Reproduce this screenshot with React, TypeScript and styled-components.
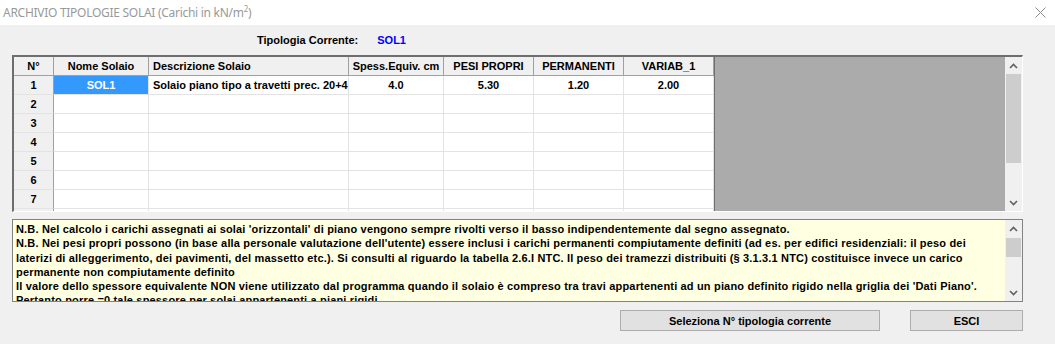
import styled, { createGlobalStyle } from 'styled-components';

const GlobalStyle = createGlobalStyle`
  html, body {
    margin: 0;
    padding: 0;
    background: #f0f0f0;
  }
  body {
    font-family: "Liberation Sans", Arial, sans-serif;
    font-size: 11px;
    color: #000;
  }
`;

const Window = styled.div`
  width: 1055px;
  height: 344px;
  background: #f0f0f0;
  display: flex;
  flex-direction: column;
  overflow: hidden;
`;

const TitleBar = styled.div`
  height: 25px;
  background: #ffffff;
  display: flex;
  align-items: center;
  justify-content: space-between;
  padding: 0 9px 0 3px;
  box-sizing: border-box;
`;

const Title = styled.span`
  font-family: "Noto Sans", "Open Sans", sans-serif;
  font-size: 12px;
  color: #999999;
  letter-spacing: -0.28px;
  sup {
    font-size: 8px;
    vertical-align: 5px;
    line-height: 0;
  }
`;

const Body = styled.div`
  padding: 0 32px 0 12px;
  display: flex;
  flex-direction: column;
`;

const CurrentRow = styled.div`
  height: 30px;
  display: flex;
  align-items: center;
  padding: 0 0 0 245px;
  gap: 19px;
  font-weight: bold;
  font-size: 11px;
`;

const CurrentValue = styled.span`
  color: #0000ff;
`;

const GridFrame = styled.div`
  height: 157px;
  box-sizing: border-box;
  border-style: solid;
  border-width: 2px 1px 1px 2px;
  border-color: #6e6e6e #ffffff #ffffff #6e6e6e;
  display: flex;
  overflow: hidden;
`;

const Grid = styled.div`
  display: grid;
  grid-template-columns: 40px 95px 200px 95px 90px 90px 90px;
  grid-auto-rows: 19px;
  background: #ffffff;
  font-weight: bold;
`;

const Cell = styled.div<{ $head?: boolean; $fixed?: boolean; $left?: boolean; $selected?: boolean }>`
  box-sizing: border-box;
  display: flex;
  align-items: center;
  justify-content: ${(p) => (p.$left ? 'flex-start' : 'center')};
  padding: ${(p) => (p.$left ? '0 0 0 4px' : '0')};
  white-space: nowrap;
  overflow: hidden;
  background: ${(p) => (p.$selected ? '#3399ff' : p.$head || p.$fixed ? '#f0f0f0' : '#ffffff')};
  color: ${(p) => (p.$selected ? '#ffffff' : '#000000')};
  border-right: 1px solid ${(p) => (p.$head || p.$fixed ? '#a0a0a0' : '#e3e3e3')};
  border-bottom: 1px solid ${(p) => (p.$head ? '#a0a0a0' : '#e3e3e3')};
`;

const EmptyArea = styled.div`
  flex: 1;
  background: #ababab;
  border-left: 1px solid #6e6e6e;
`;

const ScrollBar = styled.div`
  width: 17px;
  flex-shrink: 0;
  background: #f0f0f0;
  display: flex;
  flex-direction: column;
  align-items: center;
`;

const ArrowBox = styled.div`
  width: 17px;
  height: 17px;
  display: flex;
  align-items: center;
  justify-content: center;
  flex-shrink: 0;
`;

const Track = styled.div`
  flex: 1;
  width: 100%;
`;

const Thumb = styled.div<{ $top: number; $size: number }>`
  margin: ${(p) => p.$top}px auto 0;
  width: 15px;
  height: ${(p) => p.$size}px;
  background: #cdcdcd;
`;

const Notes = styled.div`
  margin-top: 7px;
  height: 83px;
  box-sizing: border-box;
  border: 1px solid #828282;
  background: #ffffe1;
  display: flex;
`;

const NotesText = styled.div`
  flex: 1;
  padding: 2px 0 0 3px;
  overflow: hidden;
  font-weight: bold;
  line-height: 14.3px;
  letter-spacing: 0.17px;
`;

const NoteLine = styled.div`
  white-space: nowrap;
`;

const ButtonRow = styled.div`
  margin-top: 8px;
  display: flex;
  justify-content: flex-end;
  gap: 30px;
`;

const Button = styled.button<{ $width: number }>`
  width: ${(p) => p.$width}px;
  height: 21px;
  box-sizing: border-box;
  background: #e1e1e1;
  border: 1px solid #adadad;
  font-family: "Liberation Sans", Arial, sans-serif;
  font-size: 11px;
  font-weight: bold;
  color: #000;
  padding: 0;
`;

const Chevron = ({ down }: { down?: boolean }) => (
  <svg width="9" height="6" viewBox="0 0 9 6">
    <polyline
      points={down ? '1,1 4.5,4.5 8,1' : '1,5 4.5,1.5 8,5'}
      fill="none"
      stroke="#606060"
      strokeWidth="1.6"
    />
  </svg>
);

const CloseIcon = () => (
  <svg width="11" height="11" viewBox="0 0 11 11">
    <path d="M0.5 0.5 L10.5 10.5 M10.5 0.5 L0.5 10.5" stroke="#8a8a8a" strokeWidth="1" />
  </svg>
);

const headers = ['N°', 'Nome Solaio', 'Descrizione Solaio', 'Spess.Equiv. cm', 'PESI PROPRI', 'PERMANENTI', 'VARIAB_1'];

const rows = [
  ['1', 'SOL1', 'Solaio piano tipo a travetti prec. 20+4', '4.0', '5.30', '1.20', '2.00'],
  ['2', '', '', '', '', '', ''],
  ['3', '', '', '', '', '', ''],
  ['4', '', '', '', '', '', ''],
  ['5', '', '', '', '', '', ''],
  ['6', '', '', '', '', '', ''],
  ['7', '', '', '', '', '', ''],
  ['', '', '', '', '', '', ''],
];

const notes = [
  "N.B. Nel calcolo i carichi assegnati ai solai 'orizzontali' di piano vengono sempre rivolti verso il basso indipendentemente dal segno assegnato.",
  "N.B. Nei pesi propri possono (in base alla personale valutazione dell'utente) essere inclusi i carichi permanenti compiutamente definiti (ad es. per edifici residenziali: il peso dei",
  'laterizi di alleggerimento, dei pavimenti, del massetto etc.). Si consulti al riguardo la tabella 2.6.I NTC. Il peso dei tramezzi distribuiti (§ 3.1.3.1 NTC) costituisce invece un carico',
  'permanente non compiutamente definito',
  "Il valore dello spessore equivalente NON viene utilizzato dal programma quando il solaio è compreso tra travi appartenenti ad un piano definito rigido nella griglia dei 'Dati Piano'.",
  'Pertanto porre =0 tale spessore per solai appartenenti a piani rigidi',
];

const Scroll = ({ top, size }: { top: number; size: number }) => (
  <ScrollBar>
    <ArrowBox>
      <Chevron />
    </ArrowBox>
    <Track>
      <Thumb $top={top} $size={size} />
    </Track>
    <ArrowBox>
      <Chevron down />
    </ArrowBox>
  </ScrollBar>
);

const App = () => {
  return (
    <>
      <GlobalStyle />
      <Window>
        <TitleBar>
          <Title>
            ARCHIVIO TIPOLOGIE SOLAI (Carichi in kN/m<sup>2</sup>)
          </Title>
          <CloseIcon />
        </TitleBar>

        <Body>
          <CurrentRow>
            <span>Tipologia Corrente:</span>
            <CurrentValue>SOL1</CurrentValue>
          </CurrentRow>

          <GridFrame>
            <Grid>
              {headers.map((h, i) => (
                <Cell key={h} $head $left={i === 2}>
                  {h}
                </Cell>
              ))}
              {rows.map((r, ri) =>
                r.map((v, ci) => (
                  <Cell
                    key={`${ri}-${ci}`}
                    $fixed={ci === 0}
                    $left={ci === 2}
                    $selected={ri === 0 && ci === 1}
                  >
                    {v}
                  </Cell>
                ))
              )}
            </Grid>
            <EmptyArea />
            <Scroll top={0} size={89} />
          </GridFrame>

          <Notes>
            <NotesText>
              {notes.map((n, i) => (
                <NoteLine key={i}>{n}</NoteLine>
              ))}
            </NotesText>
            <Scroll top={1} size={19} />
          </Notes>

          <ButtonRow>
            <Button $width={260}>Seleziona N° tipologia corrente</Button>
            <Button $width={113}>ESCI</Button>
          </ButtonRow>
        </Body>
      </Window>
    </>
  );
};

export default App;
